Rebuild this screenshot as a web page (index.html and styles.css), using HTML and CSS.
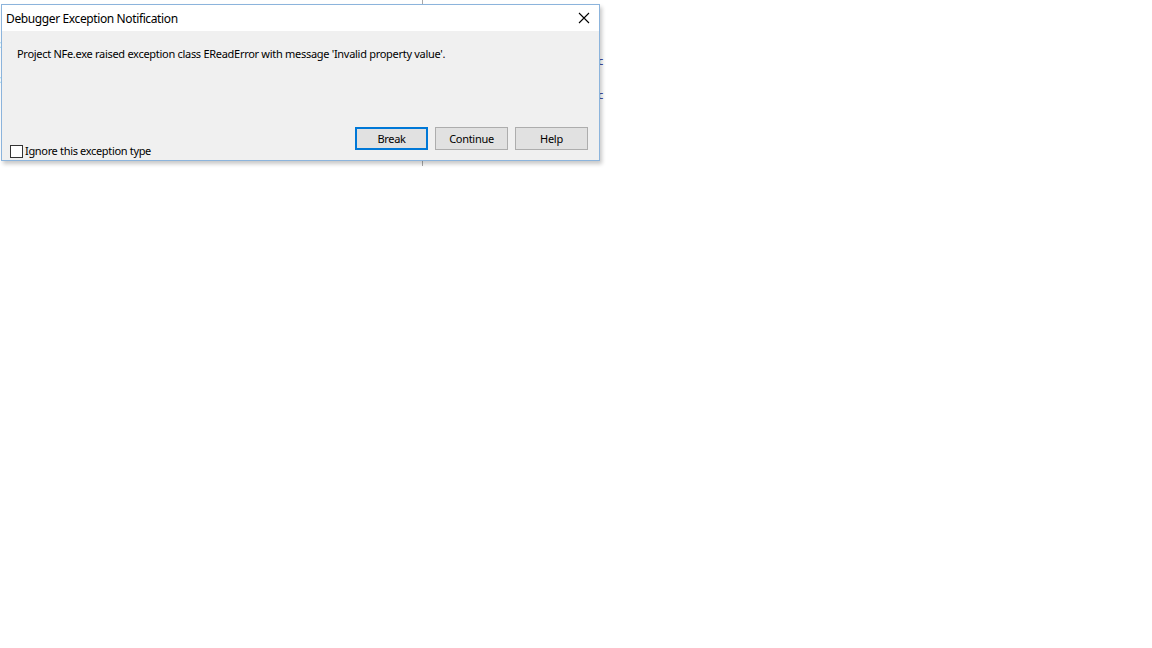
FILE: index.html
```html
<!DOCTYPE html>
<html>
<head>
<meta charset="utf-8">
<link rel="stylesheet" href="styles.css">
</head>
<body>
<div class="desktop">
  <div class="backdrop">
    <div class="splitter"></div>
    <span class="peek peek-left p1">:</span>
    <span class="peek peek-left p2">:</span>
    <span class="peek peek-right p3">c</span>
    <span class="peek peek-right p4">c</span>
  </div>
  <div class="dialog">
    <div class="titlebar">
      <span class="title">Debugger Exception Notification</span>
      <button class="close" aria-label="Close">
        <svg width="12" height="12" viewBox="0 0 12 12"><path d="M1 1L11 11M11 1L1 11" stroke="#000" stroke-width="1.1" fill="none"/></svg>
      </button>
    </div>
    <div class="content">
      <p class="message">Project NFe.exe raised exception class EReadError with message 'Invalid property value'.</p>
      <div class="footer">
        <label class="check"><span class="box"></span><span class="check-label">Ignore this exception type</span></label>
        <div class="buttons">
          <button class="btn btn-default">Break</button>
          <button class="btn">Continue</button>
          <button class="btn">Help</button>
        </div>
      </div>
    </div>
  </div>
</div>
</body>
</html>
```

FILE: styles.css
```css
html, body {
  margin: 0;
  padding: 0;
  background: #ffffff;
  width: 1152px;
  height: 648px;
  overflow: hidden;
}

.desktop {
  position: relative;
  width: 1152px;
  height: 648px;
  font-family: "Noto Sans", "Open Sans", sans-serif;
}

.backdrop {
  position: absolute;
  left: 0;
  top: 0;
  width: 610px;
  height: 170px;
}

.splitter {
  position: absolute;
  left: 422px;
  top: 0;
  width: 1px;
  height: 166px;
  background: #a8a8a8;
}

.peek {
  position: absolute;
  font-size: 11px;
  line-height: 11px;
}

.peek-left { left: -2px; color: #555; }
.peek-right { left: 598px; color: #2a3a9a; }
.p1 { top: 38px; }
.p2 { top: 73px; }
.p3 { top: 55px; }
.p4 { top: 89px; }

.dialog {
  position: absolute;
  left: 1px;
  top: 4px;
  width: 597px;
  height: 155px;
  border: 1px solid #8cb4dc;
  background: #f0f0f0;
  box-shadow: 2px 3px 4px rgba(0, 0, 0, 0.22);
  display: flex;
  flex-direction: column;
}

.titlebar {
  height: 26px;
  background: #ffffff;
  display: flex;
  align-items: center;
  justify-content: space-between;
  padding-left: 4px;
}

.title {
  font-family: "Noto Sans", sans-serif;
  font-size: 12px;
  color: #000;
  letter-spacing: -0.38px;
  padding-top: 1px;
}

.close {
  width: 30px;
  height: 26px;
  border: 0;
  background: transparent;
  display: flex;
  align-items: center;
  justify-content: center;
  padding: 0;
  margin-right: 0;
}

.content {
  flex: 1;
  display: flex;
  flex-direction: column;
  justify-content: space-between;
  padding: 0 11px 2px 8px;
}

.message {
  margin: 16px 0 0 7px;
  font-size: 11px;
  line-height: 14px;
  color: #000;
  letter-spacing: -0.29px;
}

.footer {
  display: flex;
  align-items: flex-end;
  justify-content: space-between;
}

.check {
  display: flex;
  align-items: center;
  gap: 2px;
  margin-bottom: 0;
}

.box {
  width: 11px;
  height: 11px;
  border: 1px solid #333;
  background: #fff;
}

.check-label {
  font-size: 11px;
  color: #000;
  letter-spacing: -0.33px;
  line-height: 14px;
}

.buttons {
  display: flex;
  gap: 7px;
  margin-bottom: 8px;
}

.btn {
  width: 73px;
  height: 23px;
  background: #e1e1e1;
  border: 1px solid #adadad;
  font-family: "Noto Sans", sans-serif;
  font-size: 11px;
  color: #000;
  padding: 0;
  letter-spacing: -0.3px;
}

.btn-default {
  border: 2px solid #0078d7;
}
```
